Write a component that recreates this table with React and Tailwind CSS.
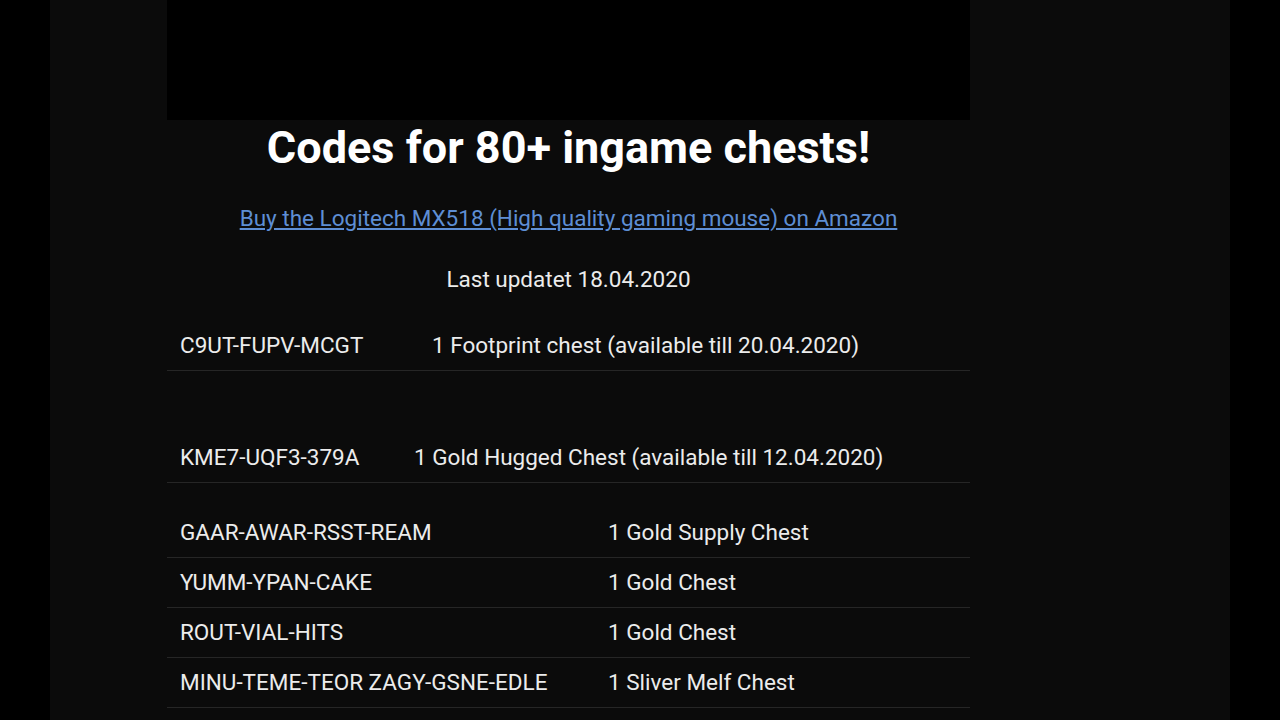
const firstRows = [
  { code: 'C9UT-FUPV-MCGT', prize: '1 Footprint chest (available till 20.04.2020)', col: 'w-[252px]' },
];

const secondRows = [
  { code: 'KME7-UQF3-379A', prize: '1 Gold Hugged Chest (available till 12.04.2020)', col: 'w-[234px]' },
];

const codes = [
  { code: 'GAAR-AWAR-RSST-REAM', prize: '1 Gold Supply Chest' },
  { code: 'YUMM-YPAN-CAKE', prize: '1 Gold Chest' },
  { code: 'ROUT-VIAL-HITS', prize: '1 Gold Chest' },
  { code: 'MINU-TEME-TEOR ZAGY-GSNE-EDLE', prize: '1 Sliver Melf Chest' },
];

const Row = ({ code, prize, col }) => (
  <div className="flex items-center h-[50px] border-b border-[#262626] px-[13px] text-[22.5px] text-[#ececec]">
    <span className={`${col} shrink-0 whitespace-nowrap`}>{code}</span>
    <span className="whitespace-nowrap">{prize}</span>
  </div>
);

export default function App() {
  return (
    <div className="flex h-[720px] w-[1280px] overflow-hidden bg-black" style={{ fontFamily: 'Roboto, "Liberation Sans", sans-serif' }}>
      <div className="w-[50px] shrink-0 bg-black" />

      <div className="flex-1 bg-[#0b0b0b]">
        <div className="ml-[117px] w-[803px]">
          {/* video placeholder */}
          <div className="h-[120px] bg-black" />

          <h1 className="h-[56px] leading-[56px] text-center text-[45px] font-bold text-white whitespace-nowrap">
            Codes for 80+ ingame chests!
          </h1>

          <p className="mt-[28px] leading-[28px] text-center text-[22.5px] whitespace-nowrap">
            <a href="#" className="text-[#5e8ed4] underline underline-offset-2">
              Buy the Logitech MX518 (High quality gaming mouse) on Amazon
            </a>
          </p>

          <p className="mt-[33px] leading-[28px] text-center text-[22.5px] text-[#ececec]">
            Last updatet 18.04.2020
          </p>

          <div className="mt-[28px]">
            {firstRows.map((r) => (
              <Row key={r.code} {...r} />
            ))}
          </div>

          <div className="mt-[62px]">
            {secondRows.map((r) => (
              <Row key={r.code} {...r} />
            ))}
          </div>

          <div className="mt-[25px]">
            {codes.map((r) => (
              <Row key={r.code} code={r.code} prize={r.prize} col="w-[428px]" />
            ))}
          </div>
        </div>
      </div>

      <div className="w-[50px] shrink-0 bg-black" />
    </div>
  );
}
